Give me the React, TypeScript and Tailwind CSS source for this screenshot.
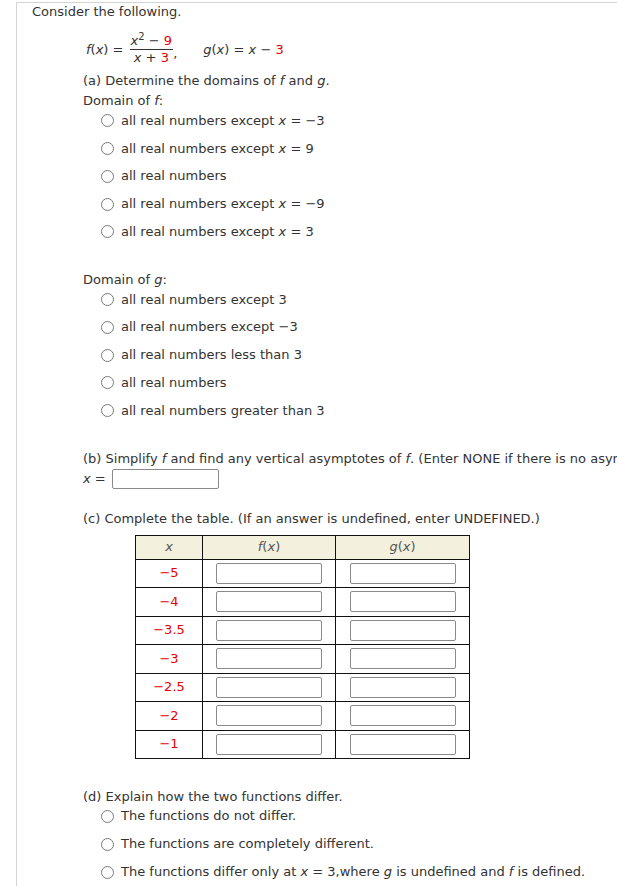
const red = "text-[#e60000]";

function Radio({ children, tall }: { children: React.ReactNode; tall?: boolean }) {
  return (
    <div className={`flex items-center ${tall ? "h-[28px]" : "h-[27.75px]"}`}>
      <span className="ml-[18px] box-border h-[13px] w-[13px] rounded-full border border-[#7a7a7a] bg-white" />
      <span className="ml-[7px] whitespace-nowrap">{children}</span>
    </div>
  );
}

function Box({ w }: { w: string }) {
  return <div className={`box-border h-[21px] ${w} rounded-[2px] border border-[#8a8a8a] bg-white`} />;
}

const xs = ["5", "4", "3.5", "3", "2.5", "2", "1"];

export default function App() {
  return (
    <div className="h-[886px] w-[617px] overflow-hidden bg-white font-['DejaVu_Sans',Verdana,sans-serif] text-[13px] leading-[16px] text-[#333]">
      <div className="ml-[16px] mt-[2px] h-[884px] border-l border-t border-[#d4d4d4] pl-[15px]">
        <div className="pt-[1px]">Consider the following.</div>

        {/* formula */}
        <div className="ml-[54px] mt-[13px] flex items-center">
          <span>
            <i>f</i>(<i>x</i>) =&nbsp;
          </span>
          <span className="ml-[2px] inline-flex flex-col items-center">
            <span className="px-[1px] leading-[16px]">
              <i>x</i>
              <sup className="text-[10px]">2</sup> − <span className={red}>9</span>
            </span>
            <span className="h-px w-full bg-[#333]" />
            <span className="leading-[16px]">
              <i>x</i> + <span className={red}>3</span>
            </span>
          </span>
          <span className="mt-[8px]">,</span>
          <span className="ml-[26px]">
            <i>g</i>(<i>x</i>) = <i>x</i> − <span className={red}>3</span>
          </span>
        </div>

        <div className="ml-[51px]">
          <div className="mt-[7px]">
            (a) Determine the domains of <i>f</i> and <i>g</i>.
          </div>
          <div className="mt-[4px]">
            Domain of <i>f</i>:
          </div>
          <div className="mt-[-2px]">
            <Radio>
              all real numbers except <i>x</i> = −3
            </Radio>
            <Radio>
              all real numbers except <i>x</i> = 9
            </Radio>
            <Radio>all real numbers</Radio>
            <Radio>
              all real numbers except <i>x</i> = −9
            </Radio>
            <Radio>
              all real numbers except <i>x</i> = 3
            </Radio>
          </div>

          <div className="mt-[26px]">
            Domain of <i>g</i>:
          </div>
          <div className="mt-[-2px]">
            <Radio>all real numbers except 3</Radio>
            <Radio>all real numbers except −3</Radio>
            <Radio>all real numbers less than 3</Radio>
            <Radio>all real numbers</Radio>
            <Radio>all real numbers greater than 3</Radio>
          </div>

          <div className="mt-[26px] whitespace-nowrap">
            (b) Simplify <i>f</i> and find any vertical asymptotes of <i>f</i>. (Enter NONE if there is no asymptote.)
          </div>
          <div className="mt-[2px] flex items-center">
            <span>
              <i>x</i> =
            </span>
            <div className="ml-[6px] box-border h-[20px] w-[107px] rounded-[2px] border border-[#8a8a8a]" />
          </div>

          <div className="mt-[22px]">(c) Complete the table. (If an answer is undefined, enter UNDEFINED.)</div>

          <table className="ml-[52px] mt-[8px] border-collapse">
            <thead>
              <tr className="h-[24px] bg-[#f3f1de] text-[#555]">
                <th className="w-[67px] border border-[#111] p-0 font-normal">
                  <i>x</i>
                </th>
                <th className="w-[133px] border border-[#111] p-0 font-normal">
                  <i>f</i>(<i>x</i>)
                </th>
                <th className="w-[134px] border border-[#111] p-0 font-normal">
                  <i>g</i>(<i>x</i>)
                </th>
              </tr>
            </thead>
            <tbody>
              {xs.map((v) => (
                <tr key={v} className="h-[28.5px]">
                  <td className={`border border-[#111] p-0 text-center ${red}`}>−{v}</td>
                  <td className="border border-[#111] p-0">
                    <div className="flex justify-center">
                      <Box w="w-[106px]" />
                    </div>
                  </td>
                  <td className="border border-[#111] p-0">
                    <div className="flex justify-center">
                      <Box w="w-[106px]" />
                    </div>
                  </td>
                </tr>
              ))}
            </tbody>
          </table>

          <div className="mt-[30px]">(d) Explain how the two functions differ.</div>
          <div className="mt-[-3px]">
            <Radio tall>The functions do not differ.</Radio>
            <Radio tall>The functions are completely different.</Radio>
            <Radio tall>
              The functions differ only at <i>x</i> = 3,where <i>g</i> is undefined and <i>f</i> is defined.
            </Radio>
          </div>
        </div>
      </div>
    </div>
  );
}
